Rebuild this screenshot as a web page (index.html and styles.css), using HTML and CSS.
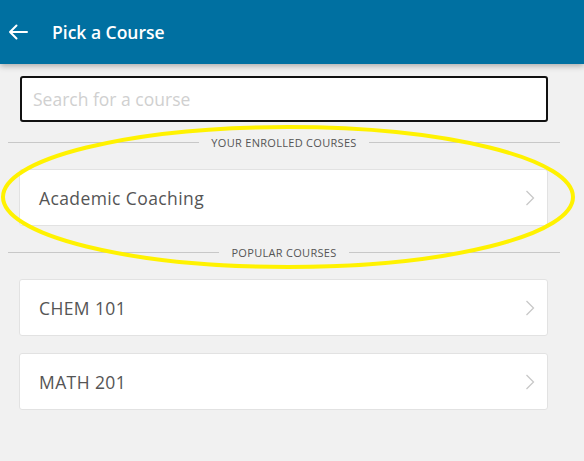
FILE: index.html
```html
<!DOCTYPE html>
<html lang="en">
<head>
    <meta charset="UTF-8">
    <meta name="viewport" content="width=device-width, initial-scale=1.0">
    <title>Pick a Course</title>
    <link rel="stylesheet" href="styles.css">
</head>
<body>
    <header class="app-bar">
        <svg class="back-icon" width="20" height="16" viewBox="0 0 20 16">
            <path d="M19 8H2M8.5 1.5L2 8l6.5 6.5" fill="none" stroke="#fff" stroke-width="2" stroke-linecap="round" stroke-linejoin="round"/>
        </svg>
        <h1 class="app-title">Pick a Course</h1>
    </header>

    <main class="content">
        <div class="search-wrap">
            <input class="search" type="text" placeholder="Search for a course">
        </div>

        <div class="divider"><span>YOUR ENROLLED COURSES</span></div>
        <div class="course-list">
            <a class="course-card" href="#">
                <span>Academic Coaching</span>
                <svg class="chevron" width="10" height="16" viewBox="0 0 10 16"><path d="M1.5 1l7 7-7 7" fill="none" stroke="#c8c8c8" stroke-width="1.3"/></svg>
            </a>
        </div>

        <div class="divider"><span>POPULAR COURSES</span></div>
        <div class="course-list">
            <a class="course-card" href="#">
                <span>CHEM 101</span>
                <svg class="chevron" width="10" height="16" viewBox="0 0 10 16"><path d="M1.5 1l7 7-7 7" fill="none" stroke="#c8c8c8" stroke-width="1.3"/></svg>
            </a>
            <a class="course-card" href="#">
                <span>MATH 201</span>
                <svg class="chevron" width="10" height="16" viewBox="0 0 10 16"><path d="M1.5 1l7 7-7 7" fill="none" stroke="#c8c8c8" stroke-width="1.3"/></svg>
            </a>
        </div>

        <!-- highlight drawn over the enrolled section -->
        <svg class="highlight" width="584" height="160" viewBox="0 0 584 160">
            <ellipse cx="288" cy="78" rx="285" ry="70" fill="none" stroke="#fff200" stroke-width="4"/>
        </svg>
    </main>
</body>
</html>
```

FILE: styles.css
```css
body {
    margin: 0;
    font-family: 'Open Sans', 'Lato', sans-serif;
    background: #f1f1f1;
    color: #555;
}

.app-bar {
    height: 64px;
    background: #0070a1;
    display: flex;
    align-items: center;
    padding-left: 8px;
    box-shadow: 0 2px 6px rgba(0, 0, 0, 0.3);
    position: relative;
    z-index: 1;
}

.back-icon {
    margin-right: 24px;
}

.app-title {
    margin: 0;
    color: #fff;
    font-size: 17.5px;
    font-weight: 600;
}

.content {
    position: relative;
    padding: 12px 0;
}

.search-wrap {
    padding: 0 36px 0 20px;
}

.search {
    box-sizing: border-box;
    width: 100%;
    height: 46px;
    border: 2px solid #111;
    border-radius: 3px;
    padding: 0 11px;
    font-family: inherit;
    font-size: 17.5px;
    background: #fff;
    outline: none;
}

.search::placeholder {
    color: #d0d0d0;
}

.divider {
    display: flex;
    align-items: center;
    gap: 12px;
    height: 14px;
    margin: 13px 24px 20px 8px;
    font-size: 11px;
    letter-spacing: 0.3px;
    color: #555;
}

.course-list + .divider {
    margin-top: 19px;
}

.divider::before,
.divider::after {
    content: "";
    flex: 1;
    height: 1px;
    background: #c8c8c8;
}

.course-list {
    display: flex;
    flex-direction: column;
    gap: 17px;
    padding: 0 36px 0 19px;
}

.course-card {
    box-sizing: border-box;
    display: flex;
    align-items: center;
    justify-content: space-between;
    height: 57px;
    padding: 0 12px 0 19px;
    background: #fff;
    border: 1px solid #e2e2e2;
    border-radius: 3px;
    text-decoration: none;
    color: #555;
    font-size: 17.5px;
    letter-spacing: 0.4px;
}

.highlight {
    position: absolute;
    left: 0;
    top: 55px;
    pointer-events: none;
}
```
